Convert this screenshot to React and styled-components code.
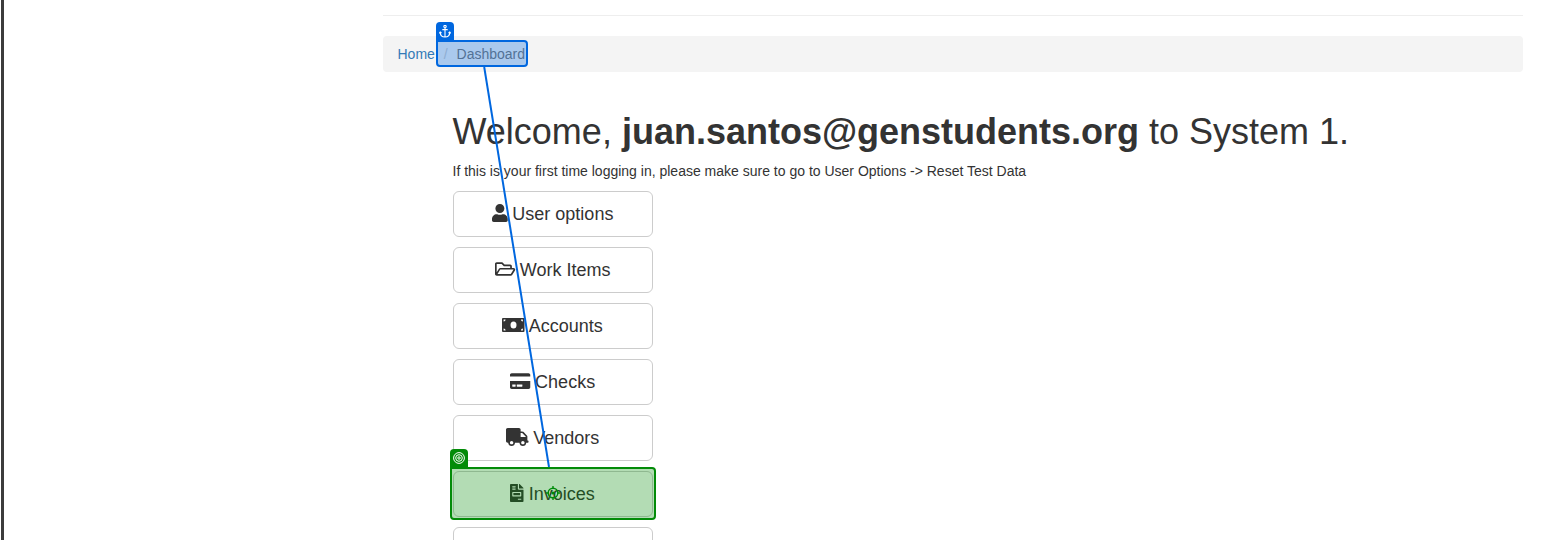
import React from 'react';
import styled, { createGlobalStyle } from 'styled-components';
import { FaUser, FaRegFolderOpen, FaCreditCard, FaTruck, FaFileInvoice } from 'react-icons/fa';

const GlobalStyle = createGlobalStyle`
  * { box-sizing: border-box; }
  body {
    margin: 0;
    background: #fff;
    overflow: hidden;
    font: 14px/20px "Liberation Sans", Arial, Helvetica, sans-serif;
    color: #333;
  }
`;

const Page = styled.div`
  position: relative;
  height: 540px;
  overflow: hidden;
  display: flex;
`;

const WindowEdge = styled.div`
  flex: none;
  width: 3px;
  margin-left: 1px;
  background: #3c3c3c;
`;

const Container = styled.main`
  flex: none;
  width: 1140px;
  margin-left: 378.5px;
  padding-top: 15px;
`;

const Divider = styled.hr`
  margin: 0 0 20px;
  border: 0;
  border-top: 1px solid #eee;
`;

const Breadcrumb = styled.ol`
  display: flex;
  height: 36px;
  margin: 0;
  padding: 8px 15px;
  list-style: none;
  background: #f4f4f4;
  border-radius: 4px;

  li + li::before {
    content: '/';
    padding: 0 8.9px;
    color: #ccc;
  }
`;

const Crumb = styled.li`
  color: ${(p) => (p.$link ? '#337ab7' : '#777')};
`;

const Content = styled.section`
  padding: 40px 0 0 70px;
`;

const Title = styled.h1`
  margin: 0 0 10px;
  font-size: 36px;
  font-weight: 400;
  line-height: 39px;
  white-space: nowrap;
`;

const Hint = styled.p`
  margin: 0 0 10px;
`;

const Menu = styled.nav`
  display: flex;
  flex-direction: column;
  align-items: flex-start;
  gap: 10px;
`;

const MenuButton = styled.button`
  width: 200px;
  height: 46px;
  padding: 10px 16px;
  border: 1px solid #ccc;
  border-radius: 6px;
  background: #fff;
  color: #333;
  font: 18px/24px "Liberation Sans", Arial, sans-serif;
  white-space: nowrap;

  svg {
    height: 18px;
    width: ${(p) => p.$iconWidth}px;
    overflow: visible;
    vertical-align: -2.25px;
  }
`;

const Highlight = styled.div`
  position: absolute;
  left: ${(p) => p.$x}px;
  top: ${(p) => p.$y}px;
  width: ${(p) => p.$w}px;
  height: ${(p) => p.$h}px;
  border: 2px solid ${(p) => p.$color};
  border-radius: 0 4px 4px 4px;
  background: ${(p) => p.$fill};
`;

const Tag = styled.span`
  position: absolute;
  left: -2px;
  top: -20px;
  width: 18px;
  height: 20px;
  display: flex;
  justify-content: center;
  padding-top: 3px;
  border-radius: 4px 4px 0 0;
  background: ${(p) => p.$color};
  svg { display: block; }
`;

const Connector = styled.svg`
  position: absolute;
  left: 0;
  top: 0;
  pointer-events: none;
`;

const MoneyIcon = () => (
  <svg viewBox="0 0 22.5 18">
    <rect x="0" y="2" width="22.5" height="14" rx="1" fill="currentColor" />
    <ellipse cx="11.5" cy="9" rx="3" ry="3.6" fill="#fff" />
    <path d="M1.6 3.5h2a2 2 0 0 1-2 2zM20.9 3.5h-2a2 2 0 0 0 2 2zM1.6 14.5h2a2 2 0 0 0-2-2zM20.9 14.5h-2a2 2 0 0 1 2-2z" fill="#fff" />
  </svg>
);

const items = [
  ['User options', FaUser, 15.75],
  ['Work Items', FaRegFolderOpen, 20.25],
  ['Accounts', MoneyIcon, 22.5],
  ['Checks', FaCreditCard, 20.25],
  ['Vendors', FaTruck, 22.5],
  ['Invoices', FaFileInvoice, 13.5],
];

const AnchorIcon = () => (
  <svg width="12" height="13" viewBox="0 0 12 13" fill="none" stroke="#fff" strokeWidth="1.1">
    <circle cx="6" cy="1.6" r="1.2" />
    <path d="M6 2.8V12M3.3 4.6h5.4M1.2 7.2C1.3 10.300 3 11.900 6 12c3-.1 4.700-1.700 4.800-4.800M.2 8.300 1.200 7l1.300 1M11.800 8.300 10.800 7 9.500 8" />
  </svg>
);

const TargetIcon = () => (
  <svg width="12" height="12" viewBox="0 0 12 12" fill="none" stroke="#fff" strokeWidth="1">
    <circle cx="6" cy="6" r="5.4" />
    <circle cx="6" cy="6" r="3.3" />
    <circle cx="6" cy="6" r="1.2" />
  </svg>
);

export default function App() {
  return (
    <>
      <GlobalStyle />
      <Page>
        <WindowEdge />
        <Container>
          <Divider />
          <Breadcrumb>
            <Crumb $link>Home</Crumb>
            <Crumb>Dashboard</Crumb>
          </Breadcrumb>
          <Content>
            <Title>
              Welcome, <b>juan.santos@genstudents.org</b> to System 1.
            </Title>
            <Hint>If this is your first time logging in, please make sure to go to User Options -&gt; Reset Test Data</Hint>
            <Menu>
              {items.map(([label, Icon, iconWidth]) => (
                <MenuButton key={label} $iconWidth={iconWidth}>
                  <Icon /> {label}
                </MenuButton>
              ))}
              <MenuButton />
            </Menu>
          </Content>
        </Container>

        <Highlight $x={436} $y={40} $w={92} $h={27} $color="#0067df" $fill="rgba(0, 103, 223, 0.3)">
          <Tag $color="#0067df"><AnchorIcon /></Tag>
        </Highlight>
        <Highlight $x={450} $y={467} $w={206} $h={53} $color="#038b08" $fill="rgba(3, 139, 8, 0.3)">
          <Tag $color="#038b08"><TargetIcon /></Tag>
        </Highlight>
        <Connector width="1561" height="540" fill="none">
          <path d="M484.2 67 549 467" stroke="#0067df" strokeWidth="2" />
          <g stroke="#008c0a" strokeWidth="1.4">
            <circle cx="553" cy="493" r="4.8" />
            <path d="M553 486v3M553 497v3M546 493h3M557 493h3" />
            <circle cx="553" cy="493" r="1.6" fill="#008c0a" stroke="none" />
          </g>
        </Connector>
      </Page>
    </>
  );
}
